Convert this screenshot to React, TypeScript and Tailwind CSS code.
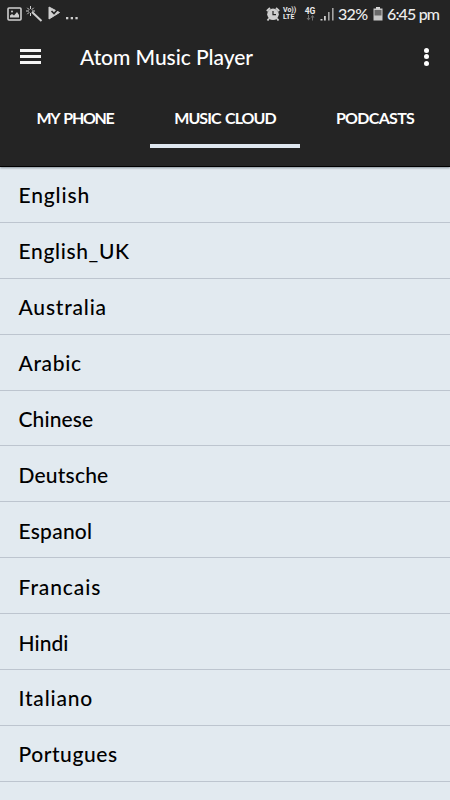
import React from "react";

const languages = [
  { name: "English", spacing: "tracking-[0.85px]" },
  { name: "English_UK", spacing: "tracking-[0.65px]" },
  { name: "Australia", spacing: "tracking-[0.8px]" },
  { name: "Arabic", spacing: "tracking-[0.65px]" },
  { name: "Chinese", spacing: "tracking-[0.1px]" },
  { name: "Deutsche", spacing: "tracking-[0.2px]" },
  { name: "Espanol", spacing: "tracking-[0.25px]" },
  { name: "Francais", spacing: "tracking-[0.9px]" },
  { name: "Hindi", spacing: "tracking-[0.05px]" },
  { name: "Italiano", spacing: "tracking-[0.8px]" },
  { name: "Portugues", spacing: "tracking-[0.55px]" },
];

function StatusBar() {
  return (
    <div className="flex h-7 items-center justify-between pl-[7px] pr-[10px] text-[#ececec]">
      <div className="flex items-center">
        <svg width="15" height="14" viewBox="0 0 15 14">
          <rect x="1" y="1" width="13" height="12" rx="1" fill="#242424" stroke="#cfcfcf" strokeWidth="1.6" />
          <path d="M3 10.500V8.500l2-1.500 2 1.500 3-3.500 2 3v2.500z" fill="#cfcfcf" />
          <circle cx="5" cy="4.500" r="1" fill="#cfcfcf" />
        </svg>
        <svg className="ml-1" width="17" height="16" viewBox="0 0 17 16" fill="none" stroke="#cfcfcf">
          <path d="M6 6l9.500 9" strokeWidth="2" />
          <path d="M4.500 0v3M4.500 7v3M0 5h3M6 5h3M1.300 1.800l2 2M7.700 1.800l-2 2M1.300 8.200l2-2" strokeWidth="1" />
        </svg>
        <svg className="mb-[2px] ml-[5px]" width="12" height="14" viewBox="0 0 12 14">
          <path d="M1 1l10.500 5.500L1 13z" fill="#cfcfcf" stroke="#cfcfcf" strokeLinejoin="round" />
          <path d="M3.500 5l2.500 2.500L11 2" fill="none" stroke="#242424" strokeWidth="1.700" />
        </svg>
        <svg className="mt-[9px] ml-[6px]" width="12" height="3" viewBox="0 0 12 3" fill="#cfcfcf">
          <rect x="0" y="0" width="2.300" height="2.300" />
          <rect x="4.700" y="0" width="2.300" height="2.300" />
          <rect x="9.400" y="0" width="2.300" height="2.300" />
        </svg>
      </div>
      <div className="flex items-center">
        <svg width="14" height="14" viewBox="0 0 14 14">
          <path d="M.8 4L4 1M13.200 4L10 1M3 11.500L1.500 13.500M11 11.500l1.500 2" stroke="#cfcfcf" strokeWidth="1.800" />
          <circle cx="7" cy="7.300" r="5.800" fill="#cfcfcf" />
          <path d="M7 4v3.700h3" fill="none" stroke="#242424" strokeWidth="1.200" />
        </svg>
        <div className="ml-[3px] flex w-[15px] flex-col font-['Roboto',sans-serif] text-[7px] leading-[7.500px] font-bold whitespace-nowrap">
          <span>Vo))</span>
          <span className="tracking-[0.1px]">LTE</span>
        </div>
        <div className="ml-[6px] flex w-[12px] flex-col items-center">
          <span className="font-['Roboto',sans-serif] text-[8.500px] leading-[8px] font-bold">4G</span>
          <svg width="9" height="6" viewBox="0 0 9 6" fill="#707070">
            <path d="M2 0h1v3h1.500L2.500 5.500.5 3H2zM6 5.500h1v-3h1.500L6.500 0l-2 2.500H6z" />
          </svg>
        </div>
        <svg className="ml-[4px]" width="14" height="14" viewBox="0 0 14 14">
          <path d="M.5 12h2v1.500h-2zM4 9h1.800v4.500H4z" fill="#cfcfcf" />
          <path d="M8 5h1.600v8.500H8zM12 1h1.600v12.500H12z" fill="#a4a4a4" />
        </svg>
        <span className="ml-1 w-[30px] text-base leading-7 font-medium tracking-[-0.7px] whitespace-nowrap">32%</span>
        <svg className="ml-[5px]" width="10" height="14" viewBox="0 0 10 14">
          <path d="M3 0h4v2H3z" fill="#d8d8d8" />
          <rect x=".5" y="1.500" width="9" height="12" fill="#c8c8c8" />
          <rect x="1.500" y="3" width="7" height="5.500" fill="#6a6a6a" />
        </svg>
        <span className="ml-[4px] w-[53px] text-base leading-7 font-medium tracking-[-0.85px] whitespace-nowrap">6:45 pm</span>
      </div>
    </div>
  );
}

export default function App() {
  return (
    <div className="flex h-[800px] w-[450px] flex-col overflow-hidden bg-[#e2eaf0] font-['Lato',sans-serif]">
      <header className="h-[167px] shrink-0 border-b border-black bg-[#242424] text-white shadow-[0_1px_2px_#87929a]">
        <StatusBar />
        <div className="flex h-[57px] items-center pr-[21px] pl-5">
          <button aria-label="Menu" className="flex w-[21px] flex-col gap-[3px]">
            <span className="h-[3px] bg-[#f4f4f4]" />
            <span className="h-[3px] bg-[#f4f4f4]" />
            <span className="h-[3px] bg-[#f4f4f4]" />
          </button>
          <h1 className="ml-[39px] grow text-[21px] leading-none font-medium tracking-[-0.05px]">Atom Music Player</h1>
          <button aria-label="More" className="flex flex-col items-center gap-[1.500px]">
            <span className="size-[5px] rounded-full bg-white" />
            <span className="size-[5px] rounded-full bg-white" />
            <span className="size-[5px] rounded-full bg-white" />
          </button>
        </div>
        <nav className="grid h-[63px] grid-cols-3 text-center text-base leading-[65px] font-bold whitespace-nowrap">
          <div className="tracking-[-1.3px] [word-spacing:2px]">MY PHONE</div>
          <div className="h-[63px] border-b-[4px] border-[#dfe7f0] tracking-[-0.95px] [word-spacing:1.5px]">MUSIC CLOUD</div>
          <div className="tracking-[-0.7px]">PODCASTS</div>
        </nav>
      </header>
      <ul>
        {languages.map(({ name, spacing }) => (
          <li key={name} className="flex h-[55.900px] items-center border-b border-[#bdc5cf] pt-px pl-[18.500px] text-[21px] leading-none font-medium text-black">
            <span className={spacing}>{name}</span>
          </li>
        ))}
      </ul>
    </div>
  );
}
